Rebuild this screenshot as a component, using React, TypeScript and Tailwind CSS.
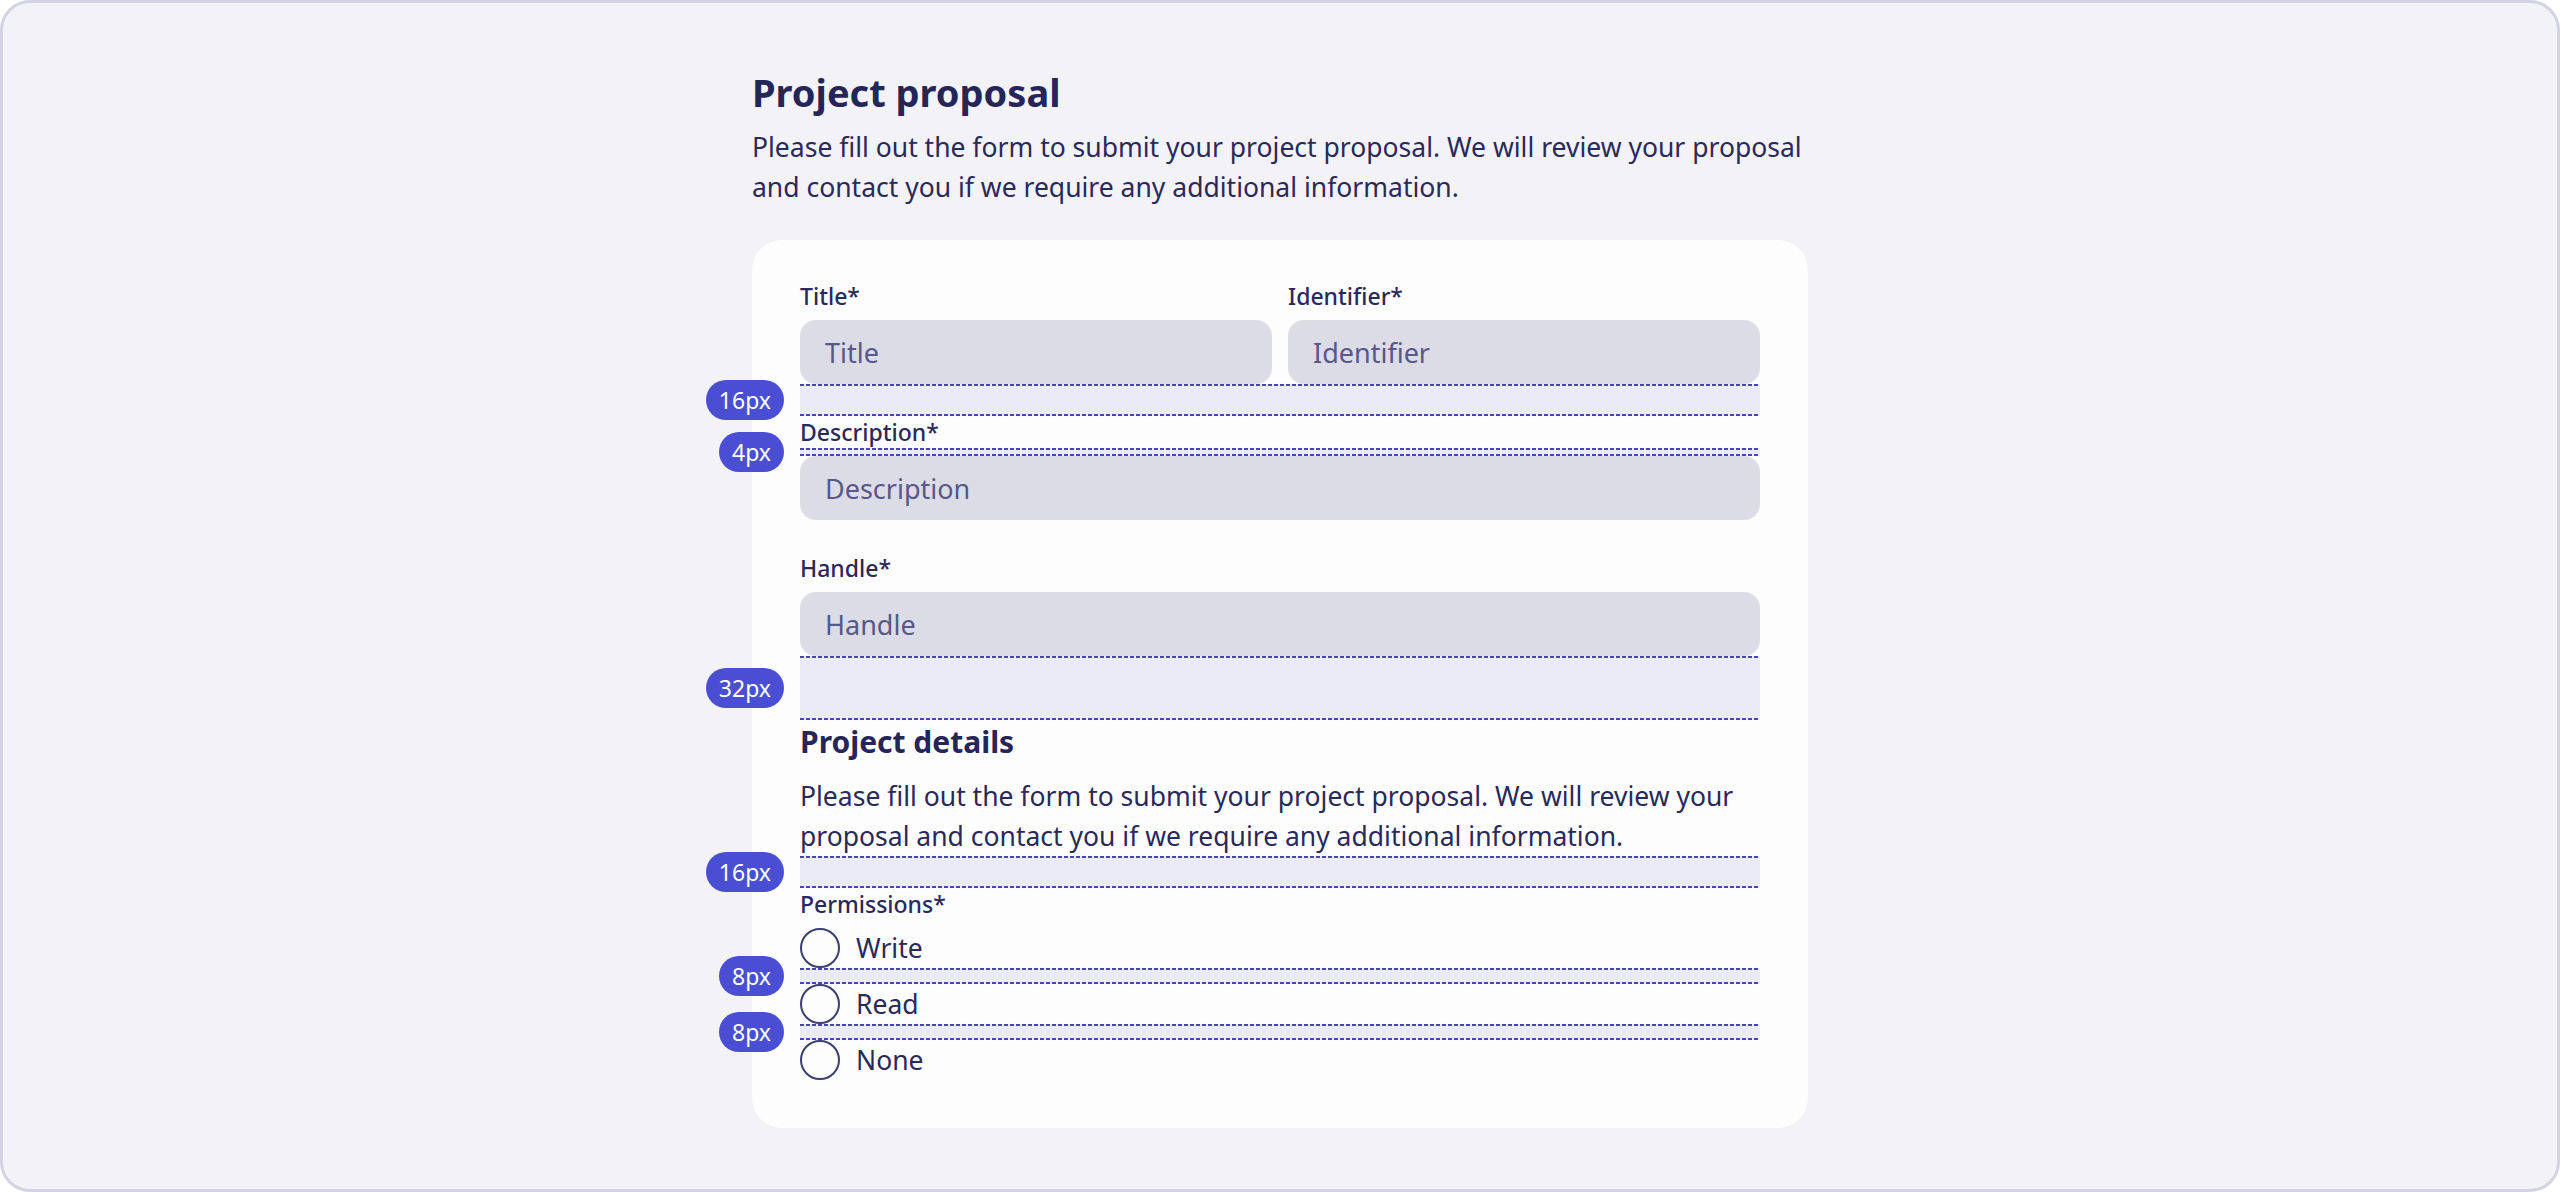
import React from "react";

function DotLine() {
  return (
    <div className="h-[2px] w-full bg-[linear-gradient(to_right,#4545b4_60%,transparent_60%)] bg-[length:6px_2px] bg-repeat-x" />
  );
}

function Band({ heightClass, label }: { heightClass: string; label: string }) {
  return (
    <div className={`relative flex w-full flex-col justify-between bg-[#ebebf8] ${heightClass}`}>
      <DotLine />
      <DotLine />
      <span className="absolute right-full top-1/2 mr-4 flex h-[40px] -translate-y-1/2 items-center rounded-full bg-[#4a4ed2] px-[13px] text-[23px] leading-none text-white">
        {label}
      </span>
    </div>
  );
}

function Label({ children }: { children: React.ReactNode }) {
  return (
    <div className="h-[32px] text-[23px] font-medium leading-[32px] text-[#29295a]">{children}</div>
  );
}

function Input({ placeholder }: { placeholder: string }) {
  return (
    <input
      placeholder={placeholder}
      className="h-[64px] w-full rounded-[16px] bg-[#dcdce6] px-[25px] text-[27px] text-[#29295a] outline-none placeholder:text-[#57578a]"
    />
  );
}

function Radio({ label }: { label: string }) {
  return (
    <div className="flex h-[40px] items-center gap-4">
      <span className="h-[40px] w-[40px] shrink-0 rounded-full border-2 border-[#3d3d6e]" />
      <span className="text-[26.5px] leading-[40px] text-[#29295a]">{label}</span>
    </div>
  );
}

export default function App() {
  return (
    <div className="flex h-[1192px] w-full justify-center rounded-[30px] border-[3px] border-[#d3d3e4] bg-[#f2f2f7] pt-[63px] font-['Noto_Sans',sans-serif]">
      <div className="flex w-[1056px] flex-col">
        <h1 className="text-[38px] font-bold leading-[52px] text-[#25255a]">Project proposal</h1>
        <p className="mt-[9px] text-[26.5px] leading-[40px] text-[#29295a]">
          Please fill out the form to submit your project proposal. We will review your proposal and contact you if we require any additional information.
        </p>
        <div className="mt-[33px] flex flex-col rounded-[30px] bg-[#fdfdfe] px-[48px] pb-[48px] pt-[40px]">
          <div className="grid grid-cols-2 gap-x-4">
            <div className="flex flex-col gap-2">
              <Label>Title*</Label>
              <Input placeholder="Title" />
            </div>
            <div className="flex flex-col gap-2">
              <Label>Identifier*</Label>
              <Input placeholder="Identifier" />
            </div>
          </div>
          <Band heightClass="h-[32px]" label="16px" />
          <div className="flex flex-col">
            <Label>Description*</Label>
            <Band heightClass="h-[8px]" label="4px" />
            <Input placeholder="Description" />
          </div>
          <div className="mt-8 flex flex-col gap-2">
            <Label>Handle*</Label>
            <Input placeholder="Handle" />
          </div>
          <Band heightClass="h-[64px]" label="32px" />
          <h2 className="text-[30px] font-bold leading-[44px] text-[#25255a]">Project details</h2>
          <p className="mt-[12px] text-[26.5px] leading-[40px] text-[#29295a]">
            Please fill out the form to submit your project proposal. We will review your proposal and contact you if we require any additional information.
          </p>
          <Band heightClass="h-[32px]" label="16px" />
          <Label>Permissions*</Label>
          <div className="mt-2 flex flex-col">
            <Radio label="Write" />
            <Band heightClass="h-[16px]" label="8px" />
            <Radio label="Read" />
            <Band heightClass="h-[16px]" label="8px" />
            <Radio label="None" />
          </div>
        </div>
      </div>
    </div>
  );
}
